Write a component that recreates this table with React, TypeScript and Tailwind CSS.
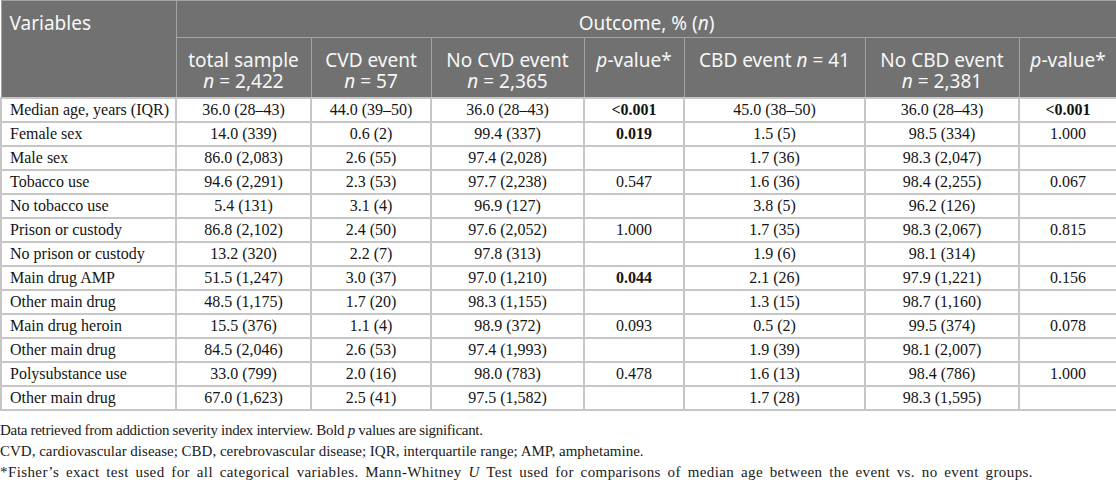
import React from 'react';

type Row = {
  label: string;
  cells: string[];
  bold?: number[];
};

// columns: total, cvd, noCvd, p1, cbd, noCbd, p2
const rows: Row[] = [
  { label: 'Median age, years (IQR)', cells: ['36.0 (28–43)', '44.0 (39–50)', '36.0 (28–43)', '<0.001', '45.0 (38–50)', '36.0 (28–43)', '<0.001'], bold: [3, 6] },
  { label: 'Female sex', cells: ['14.0 (339)', '0.6 (2)', '99.4 (337)', '0.019', '1.5 (5)', '98.5 (334)', '1.000'], bold: [3] },
  { label: 'Male sex', cells: ['86.0 (2,083)', '2.6 (55)', '97.4 (2,028)', '', '1.7 (36)', '98.3 (2,047)', ''] },
  { label: 'Tobacco use', cells: ['94.6 (2,291)', '2.3 (53)', '97.7 (2,238)', '0.547', '1.6 (36)', '98.4 (2,255)', '0.067'] },
  { label: 'No tobacco use', cells: ['5.4 (131)', '3.1 (4)', '96.9 (127)', '', '3.8 (5)', '96.2 (126)', ''] },
  { label: 'Prison or custody', cells: ['86.8 (2,102)', '2.4 (50)', '97.6 (2,052)', '1.000', '1.7 (35)', '98.3 (2,067)', '0.815'] },
  { label: 'No prison or custody', cells: ['13.2 (320)', '2.2 (7)', '97.8 (313)', '', '1.9 (6)', '98.1 (314)', ''] },
  { label: 'Main drug AMP', cells: ['51.5 (1,247)', '3.0 (37)', '97.0 (1,210)', '0.044', '2.1 (26)', '97.9 (1,221)', '0.156'], bold: [3] },
  { label: 'Other main drug', cells: ['48.5 (1,175)', '1.7 (20)', '98.3 (1,155)', '', '1.3 (15)', '98.7 (1,160)', ''] },
  { label: 'Main drug heroin', cells: ['15.5 (376)', '1.1 (4)', '98.9 (372)', '0.093', '0.5 (2)', '99.5 (374)', '0.078'] },
  { label: 'Other main drug', cells: ['84.5 (2,046)', '2.6 (53)', '97.4 (1,993)', '', '1.9 (39)', '98.1 (2,007)', ''] },
  { label: 'Polysubstance use', cells: ['33.0 (799)', '2.0 (16)', '98.0 (783)', '0.478', '1.6 (13)', '98.4 (786)', '1.000'] },
  { label: 'Other main drug', cells: ['67.0 (1,623)', '2.5 (41)', '97.5 (1,582)', '', '1.7 (28)', '98.3 (1,595)', ''] },
];

const headCell = 'border border-[#a3a3a3] align-top pt-[12px] px-1 text-center font-normal';

const App: React.FC = () => {
  return (
    <div className="w-[1116px] bg-white">
      <table className="w-[1116px] table-fixed border-collapse">
        <colgroup>
          <col className="w-[175px]" />
          <col className="w-[135px]" />
          <col className="w-[120px]" />
          <col className="w-[153px]" />
          <col className="w-[100px]" />
          <col className="w-[181px]" />
          <col className="w-[154px]" />
          <col className="w-[98px]" />
        </colgroup>
        <thead className="bg-[#717171] text-[#f7f7f7] text-[19px] leading-[21px] font-['Noto_Sans',sans-serif]">
          <tr className="h-[37px]">
            <th rowSpan={2} className="border border-[#a3a3a3] align-top pt-[12px] pl-2 text-left font-normal">
              Variables
            </th>
            <th colSpan={7} className={headCell}>
              Outcome, % (<i>n</i>)
            </th>
          </tr>
          <tr className="h-[60px]">
            <th className={headCell}>
              total sample
              <br />
              <i>n</i> = 2,422
            </th>
            <th className={headCell}>
              CVD event
              <br />
              <i>n</i> = 57
            </th>
            <th className={headCell}>
              No CVD event
              <br />
              <i>n</i> = 2,365
            </th>
            <th className={headCell}>
              <i>p</i>-value*
            </th>
            <th className={headCell}>
              CBD event <i>n</i> = 41
            </th>
            <th className={headCell}>
              No CBD event
              <br />
              <i>n</i> = 2,381
            </th>
            <th className={headCell}>
              <i>p</i>-value*
            </th>
          </tr>
        </thead>
        <tbody className="text-[16px] leading-[20px] text-[#141414] font-['Liberation_Serif',serif]">
          {rows.map((row, i) => (
            <tr key={i} className="h-[24px]">
              <td className="border-2 border-[#c6c6c6] pl-2 text-left whitespace-nowrap">{row.label}</td>
              {row.cells.map((c, j) => (
                <td
                  key={j}
                  className={`border-2 border-[#c6c6c6] text-center whitespace-nowrap ${row.bold?.includes(j) ? 'font-bold' : ''}`}
                >
                  {c}
                </td>
              ))}
            </tr>
          ))}
        </tbody>
      </table>

      <div className="mt-[9px] text-[15px] leading-[21px] text-[#1a1a1a] font-['Liberation_Serif',serif]">
        <p className="tracking-[-0.3px]">
          Data retrieved from addiction severity index interview. Bold <i>p</i> values are significant.
        </p>
        <p>CVD, cardiovascular disease; CBD, cerebrovascular disease; IQR, interquartile range; AMP, amphetamine.</p>
        <p className="whitespace-nowrap tracking-[0.4px] [word-spacing:2.6px]">
          *Fisher’s exact test used for all categorical variables. Mann-Whitney <i>U</i> Test used for comparisons of
          median age between the event vs. no event groups.
        </p>
      </div>
    </div>
  );
};

export default App;
